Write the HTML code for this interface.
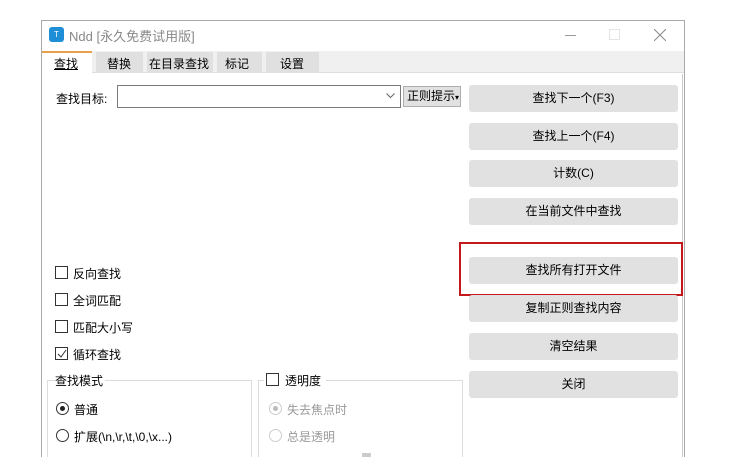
<!DOCTYPE html>
<html><head><meta charset="utf-8"><style>
*{margin:0;padding:0;box-sizing:border-box}
html,body{width:736px;height:457px;overflow:hidden}
body{background:#fff;position:relative;font-family:"Liberation Sans","Noto Sans CJK SC",sans-serif;font-size:12px;color:#000}
.a{position:absolute}
.btn{position:absolute;left:469px;width:209px;height:27px;background:#e1e1e1;border-radius:3px;text-align:center;line-height:27px;font-size:12px}
.cb{position:absolute;width:13px;height:13px;border:1px solid #333;background:#fff}
.rd{position:absolute;width:13px;height:13px;border:1px solid #333;border-radius:50%;background:#fff}
</style></head><body>
<div class="a" style="left:41px;top:20px;width:644px;height:437px;border:1px solid #aaa;border-bottom:none;background:#fff"></div>
<div class="a" style="left:49px;top:27px;width:15px;height:15px;background:#1e8fd6;border-radius:3px;color:#fff;font-size:8px;text-align:center;line-height:15px">T</div>
<div class="a" style="left:69px;top:26px;color:#888;font-size:13px">Ndd [永久免费试用版]</div>
<div class="a" style="left:565px;top:35px;width:11px;height:1px;background:#999"></div>
<div class="a" style="left:609px;top:29px;width:11px;height:11px;border:1px solid #e4e4e4"></div>
<svg class="a" style="left:654px;top:29px" width="12" height="12"><path d="M0 0L12 12M12 0L0 12" stroke="#888" stroke-width="1"/></svg>
<div class="a" style="left:42px;top:51px;width:642px;height:22px;background:#f0f0f0;border-bottom:1px solid #ddd"></div>
<div class="a" style="left:42px;top:51px;width:50px;height:23px;background:#fff;border-top:2px solid #e8a04c"></div>
<div class="a" style="left:54px;top:55px;text-decoration:underline">查找</div>
<div class="a" style="left:96px;top:52px;width:47px;height:21px;background:#e0e0e0"></div>
<div class="a" style="left:107px;top:55px">替换</div>
<div class="a" style="left:147px;top:52px;width:66px;height:21px;background:#e0e0e0"></div>
<div class="a" style="left:149px;top:55px">在目录查找</div>
<div class="a" style="left:217px;top:52px;width:45px;height:21px;background:#e0e0e0"></div>
<div class="a" style="left:225px;top:55px">标记</div>
<div class="a" style="left:266px;top:52px;width:53px;height:21px;background:#e0e0e0"></div>
<div class="a" style="left:280px;top:55px">设置</div>
<div class="a" style="left:682px;top:74px;width:1px;height:383px;background:#ccc"></div>
<div class="a" style="left:56px;top:90px">查找目标:</div>
<div class="a" style="left:117px;top:85px;width:284px;height:23px;border:1px solid #7a7a7a"></div>
<svg class="a" style="left:386px;top:93px" width="9" height="6"><path d="M0.5 0.5L4.5 4.5L8.5 0.5" stroke="#666" fill="none"/></svg>
<div class="a" style="left:403px;top:86px;width:58px;height:21px;background:#e1e1e1;border:1px solid #adadad;padding-left:3px;line-height:19px">正则提示<span style="font-size:8px">▾</span></div>
<div class="btn" style="top:85px">查找下一个(F3)</div>
<div class="btn" style="top:123px">查找上一个(F4)</div>
<div class="btn" style="top:160px">计数(C)</div>
<div class="btn" style="top:198px">在当前文件中查找</div>
<div class="btn" style="top:257px">查找所有打开文件</div>
<div class="a" style="left:459px;top:242px;width:224px;height:54px;border:2px solid #c4181c"></div>
<div class="btn" style="top:295px">复制正则查找内容</div>
<div class="btn" style="top:333px">清空结果</div>
<div class="btn" style="top:371px">关闭</div>
<div class="cb" style="left:55px;top:266px"></div><div class="a" style="left:73px;top:265px">反向查找</div>
<div class="cb" style="left:55px;top:293px"></div><div class="a" style="left:73px;top:292px">全词匹配</div>
<div class="cb" style="left:55px;top:320px"></div><div class="a" style="left:73px;top:319px">匹配大小写</div>
<div class="cb" style="left:55px;top:347px"><svg class="a" style="left:1px;top:1px" width="10" height="10"><path d="M1 5L4 8L9 1" stroke="#333" fill="none"/></svg></div><div class="a" style="left:73px;top:346px">循环查找</div>
<div class="a" style="left:47px;top:380px;width:205px;height:90px;border:1px solid #dcdcdc"></div>
<div class="a" style="left:55px;top:372px;background:#fff;padding-right:2px">查找模式</div>
<div class="rd" style="left:56px;top:402px"><div class="a" style="left:3px;top:3px;width:5px;height:5px;border-radius:50%;background:#222"></div></div>
<div class="a" style="left:74px;top:401px">普通</div>
<div class="rd" style="left:56px;top:429px"></div><div class="a" style="left:74px;top:428px">扩展(\n,\r,\t,\0,\x...)</div>
<div class="a" style="left:258px;top:380px;width:205px;height:90px;border:1px solid #dcdcdc"></div>
<div class="a" style="left:264px;top:372px;background:#fff;width:62px;height:16px"></div>
<div class="cb" style="left:266px;top:373px"></div><div class="a" style="left:285px;top:372px">透明度</div>
<div class="rd" style="left:269px;top:402px;border-color:#ccc"><div class="a" style="left:3px;top:3px;width:5px;height:5px;border-radius:50%;background:#bbb"></div></div>
<div class="a" style="left:287px;top:401px;color:#999">失去焦点时</div>
<div class="rd" style="left:269px;top:429px;border-color:#ccc"></div><div class="a" style="left:287px;top:428px;color:#999">总是透明</div>
<div class="a" style="left:362px;top:453px;width:9px;height:4px;background:#ccc"></div>
</body></html>
